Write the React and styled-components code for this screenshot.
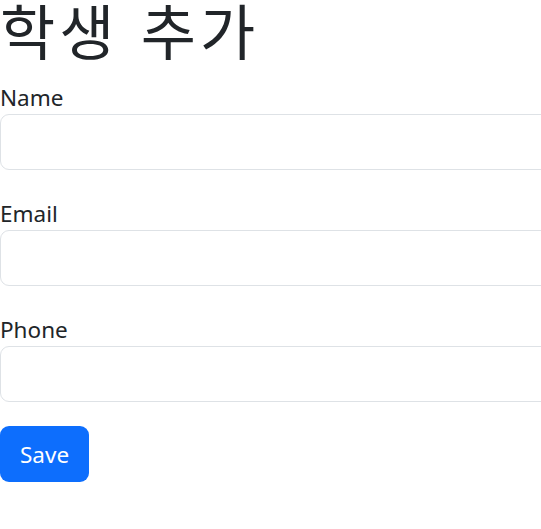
import React from "react";
import styled, { createGlobalStyle } from "styled-components";

const GlobalStyle = createGlobalStyle`
  html, body {
    margin: 0;
    padding: 0;
    overflow: hidden;
    background: #ffffff;
  }
  body {
    font-family: "Segoe UI", "Noto Sans", "Noto Sans CJK KR", sans-serif;
    color: #212529;
  }
`;

const Page = styled.div`
  width: 620px;
`;

const Title = styled.h1`
  margin: 0 0 20px;
  font-family: "Noto Sans CJK KR", sans-serif;
  font-size: 60px;
  font-weight: 400;
  line-height: 58px;
  letter-spacing: 4px;
  word-spacing: 5px;
  white-space: nowrap;
  color: #212529;
`;

const Form = styled.form`
  display: flex;
  flex-direction: column;
`;

const Group = styled.div`
  display: flex;
  flex-direction: column;
  margin-bottom: 24px;
`;

const Label = styled.label`
  font-size: 22.5px;
  line-height: 40px;
  height: 36px;
`;

const Input = styled.input`
  box-sizing: border-box;
  width: 100%;
  height: 56px;
  padding: 9px 18px;
  border: 1.5px solid #dee2e6;
  border-radius: 9px;
  font-size: 22px;
  font-family: inherit;
  color: #212529;
  background: #fff;
  outline: none;
`;

const SaveButton = styled.button`
  align-self: flex-start;
  box-sizing: border-box;
  height: 56px;
  padding: 0 20px;
  border: none;
  border-radius: 9px;
  background: #0d6efd;
  color: #fff;
  font-family: inherit;
  font-size: 22.5px;
  line-height: 58px;
  cursor: pointer;
`;

const fields = ["Name", "Email", "Phone"];

export default function App() {
  return (
    <>
      <GlobalStyle />
      <Page>
        <Title>학생 추가</Title>
        <Form onSubmit={(e) => e.preventDefault()}>
          {fields.map((f) => (
            <Group key={f}>
              <Label>{f}</Label>
              <Input type="text" />
            </Group>
          ))}
          <SaveButton type="submit">Save</SaveButton>
        </Form>
      </Page>
    </>
  );
}
